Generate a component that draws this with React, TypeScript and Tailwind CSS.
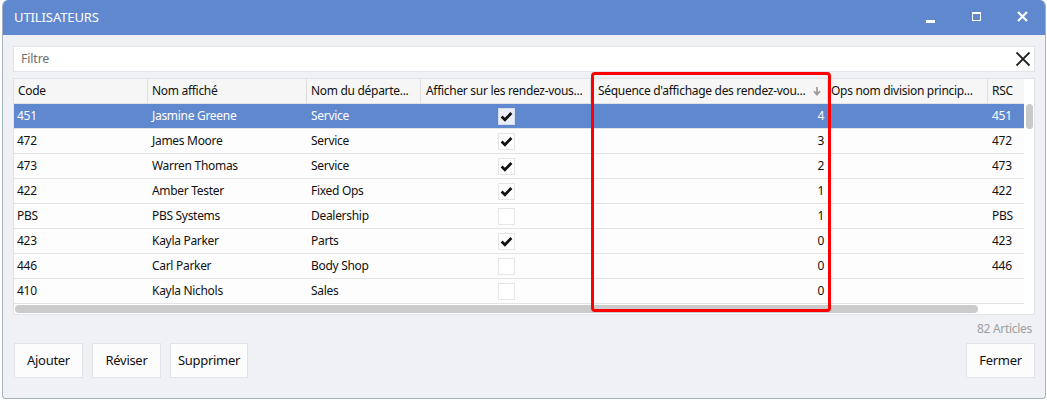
import React from 'react';

type Row = {
  code: string;
  name: string;
  dept: string;
  show: boolean;
  seq: number;
  rsc: string;
};

const rows: Row[] = [
  { code: '451', name: 'Jasmine Greene', dept: 'Service', show: true, seq: 4, rsc: '451' },
  { code: '472', name: 'James Moore', dept: 'Service', show: true, seq: 3, rsc: '472' },
  { code: '473', name: 'Warren Thomas', dept: 'Service', show: true, seq: 2, rsc: '473' },
  { code: '422', name: 'Amber Tester', dept: 'Fixed Ops', show: true, seq: 1, rsc: '422' },
  { code: 'PBS', name: 'PBS Systems', dept: 'Dealership', show: false, seq: 1, rsc: 'PBS' },
  { code: '423', name: 'Kayla Parker', dept: 'Parts', show: true, seq: 0, rsc: '423' },
  { code: '446', name: 'Carl Parker', dept: 'Body Shop', show: false, seq: 0, rsc: '446' },
  { code: '410', name: 'Kayla Nichols', dept: 'Sales', show: false, seq: 0, rsc: '' },
];

const cols = 'grid grid-cols-[134px_159px_114px_170px_237px_160px_38px]';

function Check({ checked, selected }: { checked: boolean; selected: boolean }) {
  return (
    <div
      className={`w-[17px] h-[17px] border flex items-center justify-center ${
        selected ? 'bg-[#e9eef8] border-[#d5dcea]' : 'bg-white border-[#e6e6e6]'
      }`}
    >
      {checked && (
        <svg width="13" height="11" viewBox="0 0 13 11">
          <path d="M1.6 5.6 L4.9 8.8 L11.4 2" fill="none" stroke="#111" strokeWidth="2.8" strokeLinejoin="miter" />
        </svg>
      )}
    </div>
  );
}

function Button({ label, w }: { label: string; w: string }) {
  return (
    <button className={`${w} h-[35px] bg-[#fcfcfc] border border-[#e1e3e8] text-[13px] tracking-[-0.3px] text-[#111]`}>
      {label}
    </button>
  );
}

export default function App() {
  return (
    <div className="relative w-[1047px] h-[401px] bg-white overflow-hidden" style={{ fontFamily: '"Noto Sans", "Open Sans", sans-serif' }}>
      <div className="ml-[2px] w-[1044px] h-[399px] flex flex-col rounded-t-[6px] rounded-b-[4px] border border-t-0 border-[#a7b0bd] bg-[#eff1f5] overflow-hidden">
        {/* title bar */}
        <div className="h-[35px] bg-[#5f88cf] flex items-center pl-[11px] text-white shrink-0">
          <span className="text-[13px] tracking-[-0.1px]">UTILISATEURS</span>
          <div className="ml-auto flex items-center h-full">
            <div className="w-[46px] h-full flex items-center justify-center">
              <div className="w-[9px] h-[3px] bg-white mt-[8px]" />
            </div>
            <div className="w-[46px] h-full flex items-center justify-center">
              <div className="w-[9px] h-[9px] border border-white border-t-[2px] -mt-[3px]" />
            </div>
            <div className="w-[46px] h-full flex items-center justify-center">
              <svg width="11" height="11" viewBox="0 0 11 11" className="-mt-[3px]">
                <path d="M1 1 L10 10 M10 1 L1 10" stroke="white" strokeWidth="2.2" />
              </svg>
            </div>
          </div>
        </div>

        <div className="flex-1 flex flex-col px-[10px] pt-[11px]">
          {/* filter */}
          <div className="h-[26px] bg-white border border-[#e1e4ea] flex items-center pl-[7px] pr-[3px]">
            <span className="text-[12.5px] tracking-[-0.2px] text-[#707070]">Filtre</span>
            <svg width="16" height="16" viewBox="0 0 16 16" className="ml-auto">
              <path d="M1.5 1.5 L14.5 14.5 M14.5 1.5 L1.5 14.5" stroke="#222" strokeWidth="1.8" />
            </svg>
          </div>

          {/* grid */}
          <div className="mt-[6px] h-[237px] bg-white border border-[#dfe2e7] flex">
            <div className="flex-1 flex flex-col overflow-hidden">
              <div className={`${cols} h-[25px] bg-[#f6f6f6] border-b border-[#e2e2e2] text-[12px] tracking-[-0.3px] text-[#111] whitespace-nowrap`}>
                <div className="border-r border-[#dedede] px-[4px] flex items-center">Code</div>
                <div className="border-r border-[#dedede] px-[4px] flex items-center">Nom affiché</div>
                <div className="border-r border-[#dedede] px-[4px] flex items-center">Nom du départe...</div>
                <div className="border-r border-[#dedede] px-[5px] flex items-center">Afficher sur les rendez-vous...</div>
                <div className="border-r border-[#dedede] pl-[7px] pr-[6px] flex items-center justify-between">
                  <span>Séquence d'affichage des rendez-vou...</span>
                  <svg width="8" height="9" viewBox="0 0 8 9" className="shrink-0">
                    <path d="M4 0 V7 M1 4.2 L4 7.6 L7 4.2" fill="none" stroke="#9a9a9a" strokeWidth="1.7" />
                  </svg>
                </div>
                <div className="border-r border-[#dedede] px-[3px] flex items-center">Ops nom division princip...</div>
                <div className="px-[4px] flex items-center">RSC</div>
              </div>
              {rows.map((r, i) => {
                const sel = i === 0;
                return (
                  <div
                    key={r.code}
                    className={`${cols} h-[25px] border-b border-[#e3e3e3] text-[12px] tracking-[-0.3px] ${
                      sel ? 'bg-[#5f88cf] text-white' : 'bg-[#fdfdfd] text-[#111]'
                    }`}
                  >
                    <div className="px-[3px] flex items-center">{r.code}</div>
                    <div className="px-[4px] flex items-center">{r.name}</div>
                    <div className="px-[4px] flex items-center">{r.dept}</div>
                    <div className="flex items-center justify-center">
                      <Check checked={r.show} selected={sel} />
                    </div>
                    <div className="px-[4px] flex items-center justify-end">{r.seq}</div>
                    <div />
                    <div className="px-[4px] flex items-center">{r.rsc}</div>
                  </div>
                );
              })}
              <div className="h-[10px] flex items-center">
                <div className="ml-[1px] w-[963px] h-[8px] rounded-full bg-[#cbcbcb]" />
              </div>
            </div>
            <div className="w-[10px] bg-white flex justify-center">
              <div className="mt-[25px] w-[7px] h-[25px] rounded-full bg-[#c9c9c9]" />
            </div>
          </div>

          <div className="h-[28px] flex items-center justify-end pr-[3px]">
            <span className="text-[12px] tracking-[-0.3px] text-[#a0a0a0]">82 Articles</span>
          </div>

          {/* buttons */}
          <div className="flex items-center gap-[9px] pl-[1px]">
            <Button label="Ajouter" w="w-[69px]" />
            <Button label="Réviser" w="w-[69px]" />
            <Button label="Supprimer" w="w-[78px]" />
            <div className="ml-auto">
              <Button label="Fermer" w="w-[69px]" />
            </div>
          </div>
        </div>
      </div>

      {/* annotation highlight */}
      <div className="absolute left-[591px] top-[72px] w-[240px] h-[240px] border-[3px] border-[#ff0000] rounded-[4px] pointer-events-none" />
    </div>
  );
}
